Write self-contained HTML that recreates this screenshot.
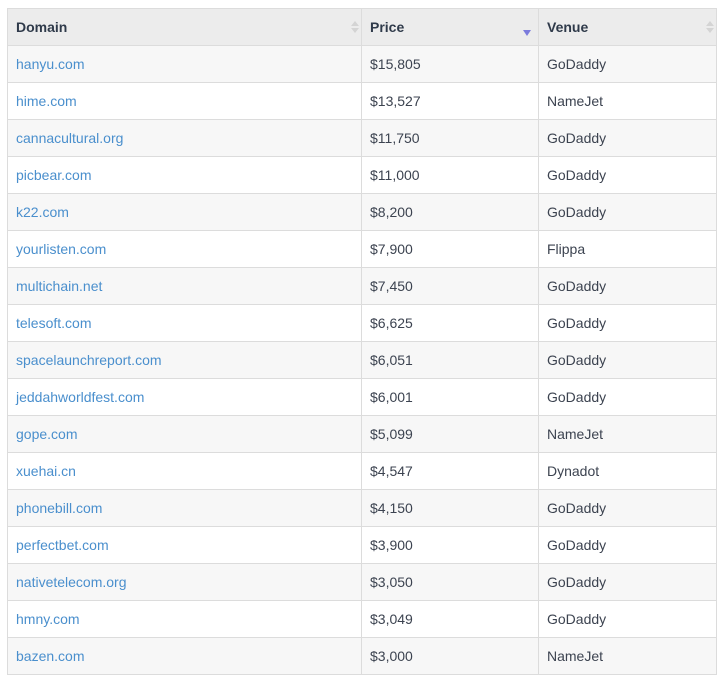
<!DOCTYPE html>
<html><head><style>
body{margin:0;background:#fff;font-family:"Liberation Sans",sans-serif;}
table{position:absolute;left:7px;top:8px;width:710px;border-collapse:collapse;font-size:14px;color:#3c4350;}
td,th{border:1px solid #dcdcdc;height:37px;padding:0 0 0 8px;text-align:left;box-sizing:border-box;}
th{background:#ececec;font-weight:bold;color:#2f3a4a;position:relative;}
tr:nth-child(even) td{background:#f7f7f7;}
tr:nth-child(odd) td{background:#fff;}
a{color:#4a8fcd;text-decoration:none;}
.s{position:absolute;right:6px;top:12px;width:0;height:0;}
.s:before{content:"";position:absolute;left:-4px;top:0;border:4px solid transparent;border-bottom:5px solid #d4d4d4;border-top:0;}
.s:after{content:"";position:absolute;left:-4px;top:7px;border:4px solid transparent;border-top:5px solid #d4d4d4;border-bottom:0;}
.d{position:absolute;right:7px;top:21px;border:4px solid transparent;border-top:6px solid #7b7bdc;border-bottom:0;}
</style></head><body>
<table>
<tr><th style="width:354px">Domain<span class="s"></span></th><th style="width:177px">Price<span class="d"></span></th><th>Venue<span class="s"></span></th></tr>
<tr><td><a>hanyu.com</a></td><td>$15,805</td><td>GoDaddy</td></tr>
<tr><td><a>hime.com</a></td><td>$13,527</td><td>NameJet</td></tr>
<tr><td><a>cannacultural.org</a></td><td>$11,750</td><td>GoDaddy</td></tr>
<tr><td><a>picbear.com</a></td><td>$11,000</td><td>GoDaddy</td></tr>
<tr><td><a>k22.com</a></td><td>$8,200</td><td>GoDaddy</td></tr>
<tr><td><a>yourlisten.com</a></td><td>$7,900</td><td>Flippa</td></tr>
<tr><td><a>multichain.net</a></td><td>$7,450</td><td>GoDaddy</td></tr>
<tr><td><a>telesoft.com</a></td><td>$6,625</td><td>GoDaddy</td></tr>
<tr><td><a>spacelaunchreport.com</a></td><td>$6,051</td><td>GoDaddy</td></tr>
<tr><td><a>jeddahworldfest.com</a></td><td>$6,001</td><td>GoDaddy</td></tr>
<tr><td><a>gope.com</a></td><td>$5,099</td><td>NameJet</td></tr>
<tr><td><a>xuehai.cn</a></td><td>$4,547</td><td>Dynadot</td></tr>
<tr><td><a>phonebill.com</a></td><td>$4,150</td><td>GoDaddy</td></tr>
<tr><td><a>perfectbet.com</a></td><td>$3,900</td><td>GoDaddy</td></tr>
<tr><td><a>nativetelecom.org</a></td><td>$3,050</td><td>GoDaddy</td></tr>
<tr><td><a>hmny.com</a></td><td>$3,049</td><td>GoDaddy</td></tr>
<tr><td><a>bazen.com</a></td><td>$3,000</td><td>NameJet</td></tr>
</table>
</body></html>
